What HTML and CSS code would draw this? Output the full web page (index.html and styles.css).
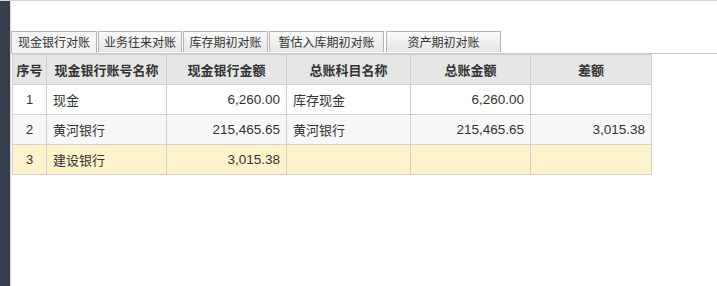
FILE: index.html
```html
<!DOCTYPE html>
<html>
<head>
<meta charset="utf-8">
<link rel="stylesheet" href="styles.css">
</head>
<body>
<div class="page">
  <div class="sidebar"></div>
  <div class="divider"></div>
  <div class="content">
    <div class="tabs">
      <div class="tab active w1">现金银行对账</div>
      <div class="tab w2">业务往来对账</div>
      <div class="tab w3">库存期初对账</div>
      <div class="tab w4">暂估入库期初对账</div>
      <div class="tab w5">资产期初对账</div>
    </div>
    <table class="grid">
      <colgroup>
        <col class="c1"><col class="c2"><col class="c3"><col class="c4"><col class="c5"><col class="c6">
      </colgroup>
      <thead>
        <tr><th>序号</th><th>现金银行账号名称</th><th>现金银行金额</th><th>总账科目名称</th><th>总账金额</th><th>差额</th></tr>
      </thead>
      <tbody>
        <tr><td class="idx">1</td><td class="name">现金</td><td class="num">6,260.00</td><td class="name">库存现金</td><td class="num">6,260.00</td><td class="num"></td></tr>
        <tr class="alt"><td class="idx">2</td><td class="name">黄河银行</td><td class="num">215,465.65</td><td class="name">黄河银行</td><td class="num">215,465.65</td><td class="num">3,015.38</td></tr>
        <tr class="hl"><td class="idx">3</td><td class="name">建设银行</td><td class="num">3,015.38</td><td class="name"></td><td class="num"></td><td class="num"></td></tr>
      </tbody>
    </table>
  </div>
</div>
</body>
</html>
```
FILE: styles.css
```css
html, body {
  margin: 0;
  padding: 0;
  background: #fff;
  height: 100%;
}
body {
  font-family: "Liberation Sans", "Noto Sans CJK SC", Arial, sans-serif;
  font-size: 13.5px;
  color: #333;
}
.page {
  display: flex;
  height: 286px;
  border-top: 1px solid #d8d8d8;
  box-sizing: border-box;
}
.sidebar {
  width: 10px;
  background: #343e4f;
}
.divider {
  width: 1px;
  background: #d6d6d6;
}
.content {
  flex: 1;
  padding-top: 30px;
}
.tabs {
  display: flex;
  gap: 1px;
  height: 22px;
  border-bottom: 1px solid #c8c8c8;
  align-items: flex-start;
}
.tab {
  box-sizing: border-box;
  height: 21px;
  border: 1px solid #b4b4b4;
  border-bottom: none;
  background: linear-gradient(#fafafa, #e6e6e6);
  text-align: center;
  line-height: 19px;
  font-family: "Noto Sans CJK SC", sans-serif;
  font-size: 12px;
  color: #333;
}
.tab.active {
  background: #f4f4f4;
  height: 22px;
}
.w1 { width: 86px; }
.w2 { width: 84px; }
.w3 { width: 85px; }
.w4 { width: 115px; }
.w5 { width: 115px; margin-left: 1px; }
.grid {
  border-collapse: collapse;
  margin-left: 1px;
  table-layout: fixed;
  width: 640px;
}
.c1 { width: 34px; }
.c2 { width: 120px; }
.c3 { width: 120px; }
.c4 { width: 124px; }
.c5 { width: 120px; }
.c6 { width: 121px; }
.grid th, .grid td {
  border: 1px solid #d0d0d0;
  height: 30px;
  padding: 0 6px;
  box-sizing: border-box;
  white-space: nowrap;
  overflow: hidden;
}
.grid th {
  background: #e6e6e6;
  font-family: "Noto Sans CJK SC", sans-serif;
  font-weight: bold;
  font-size: 13px;
  text-align: center;
  color: #333;
  padding: 0 2px;
}
.grid td.idx { text-align: center; padding: 0; font-size: 13px; }
.grid td.name { text-align: left; font-family: "Noto Sans CJK SC", sans-serif; font-size: 13px; }
.grid td.num { text-align: right; }
.grid tr.alt td { background: #f7f7f7; }
.grid tr.hl td { background: #fff3cd; }
```
